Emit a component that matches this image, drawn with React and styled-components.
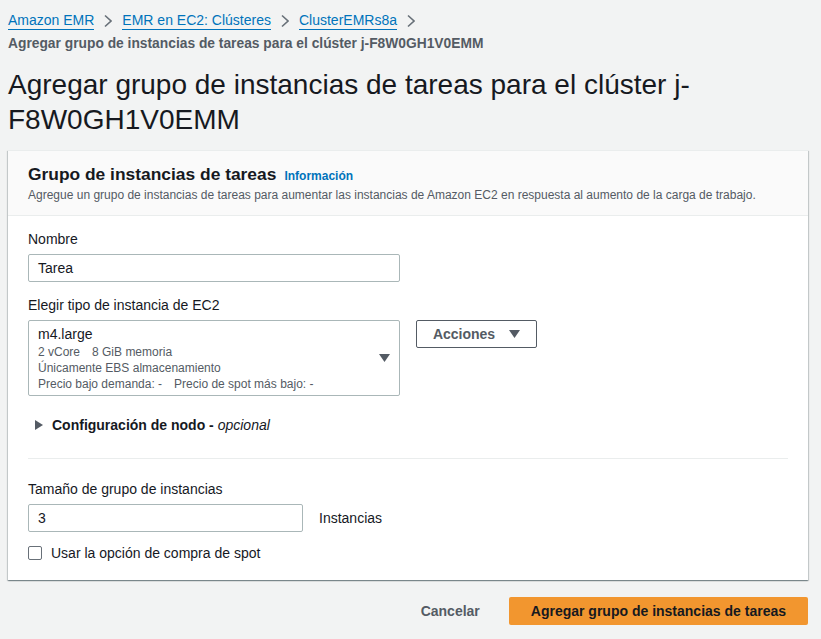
import styled, { createGlobalStyle } from "styled-components";

const GlobalStyle = createGlobalStyle`
  html, body {
    margin: 0;
    padding: 0;
    background: #f2f3f3;
    font-family: "Liberation Sans", Arial, sans-serif;
    color: #16191f;
  }
  * { box-sizing: border-box; }
`;

const Page = styled.div`
  width: 821px;
  height: 639px;
  padding: 11px 13px 0 8px;
  overflow: hidden;
`;

const Crumbs = styled.nav`
  display: flex;
  align-items: center;
  gap: 10px;
  height: 20px;
  font-size: 14px;
`;

const Crumb = styled.a`
  color: #0073bb;
  text-decoration: none;
  border-bottom: 1px solid #0073bb;
  line-height: 17px;
`;

const Chevron = () => (
  <svg width="8" height="14" viewBox="0 0 8 14">
    <path d="M1 1.5 L7 7 L1 12.5" fill="none" stroke="#687078" strokeWidth="1.6" />
  </svg>
);

const Current = styled.div`
  margin-top: 5px;
  font-size: 13.8px;
  font-weight: 700;
  color: #545b64;
  line-height: 16px;
`;

const Title = styled.h1`
  margin: 15px 0 0;
  font-size: 28px;
  font-weight: 400;
  line-height: 35px;
  color: #16191f;
  width: 720px;
`;

const Card = styled.section`
  margin-top: 13px;
  background: #fff;
  box-shadow: 0 1px 1px 0 rgba(0, 28, 36, 0.3), 1px 1px 1px 0 rgba(0, 28, 36, 0.15),
    -1px 1px 1px 0 rgba(0, 28, 36, 0.15);
  border-top: 1px solid #eaeded;
`;

const CardHead = styled.header`
  background: #fafafa;
  border-bottom: 1px solid #eaeded;
  padding: 12px 20px 12px;
`;

const HeadRow = styled.div`
  display: flex;
  align-items: baseline;
  gap: 8px;
`;

const CardTitle = styled.h2`
  margin: 0;
  font-size: 17.4px;
  font-weight: 700;
  line-height: 22px;
`;

const Info = styled.a`
  font-size: 12px;
  font-weight: 700;
  color: #0073bb;
`;

const Desc = styled.p`
  margin: 2px 0 0;
  font-size: 12px;
  color: #545b64;
  line-height: 16px;
`;

const CardBody = styled.div`
  padding: 13px 20px 17px;
`;

const Label = styled.div`
  font-size: 14px;
  line-height: 20px;
  margin-bottom: 5px;
`;

const Field = styled.div`
  margin-bottom: ${(p) => p.$mb || 0}px;
`;

const Input = styled.div`
  width: ${(p) => p.$w}px;
  height: 28px;
  border: 1px solid #aab7b8;
  border-radius: 2px;
  padding: 0 9px;
  display: flex;
  align-items: center;
  font-size: 14px;
`;

const Row = styled.div`
  display: flex;
  align-items: ${(p) => p.$align || "flex-start"};
  gap: 16px;
`;

const Select = styled.div`
  width: 372px;
  height: 76px;
  border: 1px solid #aab7b8;
  border-radius: 2px;
  padding: 3px 9px;
  display: flex;
  align-items: center;
  justify-content: space-between;
`;

const SelectMain = styled.div`
  font-size: 14px;
  line-height: 20px;
`;

const Tag = styled.div`
  font-size: 12px;
  line-height: 16px;
  color: #545b64;
  display: flex;
  gap: 12px;
`;

const Caret = ({ color = "#545b64" }) => (
  <svg width="11" height="8" viewBox="0 0 11 8">
    <path d="M0 0 H11 L5.5 8 Z" fill={color} />
  </svg>
);

const ActionBtn = styled.button`
  width: 121px;
  height: 28px;
  background: #fff;
  border: 1px solid #545b64;
  border-radius: 2px;
  font-family: inherit;
  font-size: 14px;
  font-weight: 700;
  color: #545b64;
  display: flex;
  align-items: center;
  justify-content: center;
  gap: 14px;
`;

const Expand = styled.div`
  display: flex;
  align-items: center;
  gap: 9px;
  margin: 19px 0 0 7px;
  font-size: 14px;
  font-weight: 700;
  line-height: 20px;
  em {
    font-weight: 400;
  }
`;

const Divider = styled.hr`
  border: 0;
  border-top: 1px solid #eaeded;
  margin: 23px 0 20px;
`;

const Unit = styled.span`
  font-size: 14px;
`;

const Check = styled.label`
  display: flex;
  align-items: center;
  gap: 9px;
  margin-top: 11px;
  font-size: 14px;
  line-height: 20px;
`;

const Box = styled.span`
  width: 14px;
  height: 14px;
  border: 1px solid #687078;
  border-radius: 2px;
  background: #fff;
`;

const Footer = styled.div`
  display: flex;
  justify-content: flex-end;
  align-items: center;
  gap: 23px;
  margin-top: 17px;
`;

const LinkBtn = styled.button`
  background: none;
  border: 0;
  font-family: inherit;
  font-size: 14px;
  font-weight: 700;
  color: #545b64;
`;

const Primary = styled.button`
  height: 28px;
  padding: 0 22px;
  background: #f2962f;
  border: 0;
  border-radius: 2px;
  font-family: inherit;
  font-size: 14px;
  font-weight: 700;
  color: #16191f;
`;

const Triangle = () => (
  <svg width="8" height="10" viewBox="0 0 8 10">
    <path d="M0 0 L8 5 L0 10 Z" fill="#545b64" />
  </svg>
);

export default function App() {
  return (
    <Page>
      <GlobalStyle />
      <Crumbs>
        <Crumb>Amazon EMR</Crumb>
        <Chevron />
        <Crumb>EMR en EC2: Clústeres</Crumb>
        <Chevron />
        <Crumb>ClusterEMRs8a</Crumb>
        <Chevron />
      </Crumbs>
      <Current>Agregar grupo de instancias de tareas para el clúster j-F8W0GH1V0EMM</Current>
      <Title>Agregar grupo de instancias de tareas para el clúster j-F8W0GH1V0EMM</Title>

      <Card>
        <CardHead>
          <HeadRow>
            <CardTitle>Grupo de instancias de tareas</CardTitle>
            <Info>Información</Info>
          </HeadRow>
          <Desc>
            Agregue un grupo de instancias de tareas para aumentar las instancias de Amazon EC2 en
            respuesta al aumento de la carga de trabajo.
          </Desc>
        </CardHead>
        <CardBody>
          <Field $mb={13}>
            <Label>Nombre</Label>
            <Input $w={372}>Tarea</Input>
          </Field>
          <Label>Elegir tipo de instancia de EC2</Label>
          <Row>
            <Select>
              <div>
                <SelectMain>m4.large</SelectMain>
                <Tag>
                  <span>2 vCore</span>
                  <span>8 GiB memoria</span>
                </Tag>
                <Tag>Únicamente EBS almacenamiento</Tag>
                <Tag>
                  <span>Precio bajo demanda: -</span>
                  <span>Precio de spot más bajo: -</span>
                </Tag>
              </div>
              <Caret />
            </Select>
            <ActionBtn>
              Acciones <Caret />
            </ActionBtn>
          </Row>
          <Expand>
            <Triangle />
            <span>
              Configuración de nodo - <em>opcional</em>
            </span>
          </Expand>
          <Divider />
          <Label>Tamaño de grupo de instancias</Label>
          <Row $align="center">
            <Input $w={275}>3</Input>
            <Unit>Instancias</Unit>
          </Row>
          <Check>
            <Box />
            Usar la opción de compra de spot
          </Check>
        </CardBody>
      </Card>

      <Footer>
        <LinkBtn>Cancelar</LinkBtn>
        <Primary>Agregar grupo de instancias de tareas</Primary>
      </Footer>
    </Page>
  );
}
